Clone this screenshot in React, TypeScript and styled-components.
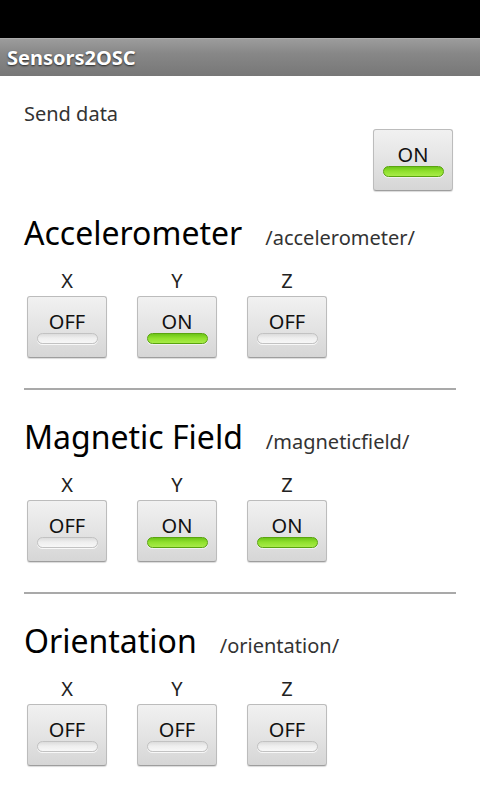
import React from "react";
import styled, { createGlobalStyle } from "styled-components";

const Global = createGlobalStyle`
  html, body { margin: 0; padding: 0; background: #fff; }
  body { font-family: "Noto Sans", "Open Sans", sans-serif; }
`;

const Screen = styled.div`
  width: 480px;
  height: 800px;
  overflow: hidden;
  background: #fff;
  display: flex;
  flex-direction: column;
`;

const StatusBar = styled.div`
  height: 38px;
  background: #000;
  flex-shrink: 0;
`;

const TitleBar = styled.div`
  height: 38px;
  flex-shrink: 0;
  background: linear-gradient(#9c9c9c, #878787 40%, #777777);
  border-top: 1px solid #ababab;
  box-sizing: border-box;
  display: flex;
  align-items: center;
  padding-left: 7px;
  color: #fff;
  font-weight: 700;
  font-size: 20px;
  text-shadow: 0 1px 2px rgba(0, 0, 0, 0.7);
`;

const Content = styled.div`
  padding: 0 24px;
  display: flex;
  flex-direction: column;
`;

const SendLabel = styled.div`
  margin-top: 24px;
  font-size: 20px;
  line-height: 28px;
  color: #333;
`;

const SendRow = styled.div`
  display: flex;
  justify-content: flex-end;
  margin-top: 1px;
  padding-right: 3px;
`;

const Section = styled.section`
  display: flex;
  flex-direction: column;
`;

const HeadingRow = styled.div<{ $first?: boolean }>`
  display: flex;
  align-items: baseline;
  margin-top: ${(p) => (p.$first ? "22px" : "27px")};
  height: 40px;
`;

const Heading = styled.h2`
  margin: 0;
  font-weight: 400;
  font-size: 32px;
  line-height: 40px;
  color: #000;
`;

const Path = styled.span`
  margin-left: 23px;
  font-size: 20px;
  line-height: 40px;
  color: #333;
`;

const Toggles = styled.div`
  display: flex;
  gap: 30px;
  margin-top: 16px;
  padding-left: 3px;
`;

const Column = styled.div`
  display: flex;
  flex-direction: column;
  align-items: center;
  width: 80px;
`;

const AxisLabel = styled.div`
  font-size: 20px;
  line-height: 24px;
  color: #222;
`;

const Toggle = styled.button<{ $spaced?: boolean }>`
  width: 80px;
  height: 62px;
  margin: ${(p) => (p.$spaced ? "3px" : "0")} 0 0 0;
  padding: 14px 0 0 0;
  box-sizing: border-box;
  display: flex;
  flex-direction: column;
  align-items: center;
  border: 1px solid #bcbcbc;
  border-bottom-color: #9e9e9e;
  border-radius: 3px;
  background: linear-gradient(#f1f1f1, #e4e4e4 50%, #d6d6d6);
  box-shadow: 0 1px 1px rgba(0, 0, 0, 0.15);
  font-family: inherit;
  cursor: pointer;
`;

const ToggleText = styled.span`
  font-size: 20px;
  line-height: 22px;
  color: #111;
`;

const Indicator = styled.span<{ $on: boolean }>`
  display: block;
  width: 61px;
  height: 11px;
  margin-top: 0;
  box-sizing: border-box;
  border-radius: 6px;
  border: 1px solid ${(p) => (p.$on ? "#5aa410" : "#c2c2c2")};
  background: ${(p) =>
    p.$on
      ? "linear-gradient(#6cc418, #8fe02c 45%, #a8ec48)"
      : "linear-gradient(#dcdcdc, #efefef 45%, #f7f7f7)"};
  box-shadow: ${(p) =>
    p.$on ? "0 1px 0 rgba(255,255,255,0.6)" : "0 1px 0 rgba(255,255,255,0.8)"};
`;

const Divider = styled.hr`
  margin: 30px 0 0 0;
  border: none;
  height: 2px;
  background: #a9a9a9;
`;

type ToggleProps = { on: boolean; spaced?: boolean };

function ToggleButton({ on, spaced }: ToggleProps) {
  return (
    <Toggle $spaced={spaced}>
      <ToggleText>{on ? "ON" : "OFF"}</ToggleText>
      <Indicator $on={on} />
    </Toggle>
  );
}

type SectionData = {
  title: string;
  path: string;
  values: [boolean, boolean, boolean];
  divider: boolean;
};

const sections: SectionData[] = [
  { title: "Accelerometer", path: "/accelerometer/", values: [false, true, false], divider: true },
  { title: "Magnetic Field", path: "/magneticfield/", values: [false, true, true], divider: true },
  { title: "Orientation", path: "/orientation/", values: [false, false, false], divider: false },
];

const axes = ["X", "Y", "Z"];

export default function App() {
  return (
    <>
      <Global />
      <Screen>
        <StatusBar />
        <TitleBar>Sensors2OSC</TitleBar>
        <Content>
          <SendLabel>Send data</SendLabel>
          <SendRow>
            <ToggleButton on={true} />
          </SendRow>
          {sections.map((s, i) => (
            <Section key={s.title}>
              <HeadingRow $first={i === 0}>
                <Heading>{s.title}</Heading>
                <Path>{s.path}</Path>
              </HeadingRow>
              <Toggles>
                {axes.map((a, j) => (
                  <Column key={a}>
                    <AxisLabel>{a}</AxisLabel>
                    <ToggleButton on={s.values[j]} spaced />
                  </Column>
                ))}
              </Toggles>
              {s.divider && <Divider />}
            </Section>
          ))}
        </Content>
      </Screen>
    </>
  );
}
